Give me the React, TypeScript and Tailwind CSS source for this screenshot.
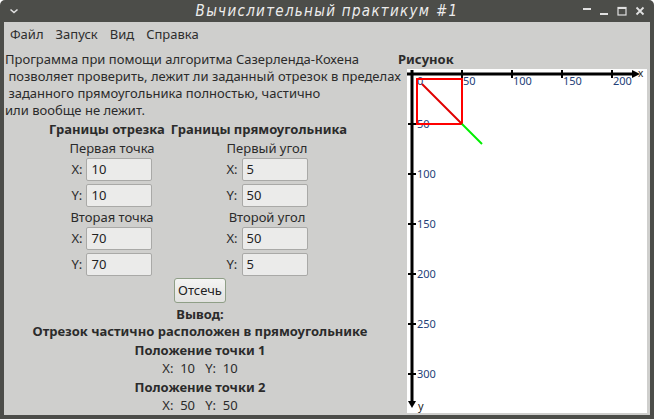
import React from "react";

const font = { fontFamily: '"Noto Sans", "Open Sans", sans-serif' };

function Field({ label, value }: { label: string; value: string }) {
  return (
    <div className="flex items-center gap-[5px]">
      <span className="w-[10px] text-[13px]">{label}</span>
      <div className="w-[66px] h-[23px] bg-[#ebebea] border border-[#a9a9a7] rounded-[2px] flex items-center pl-[4px] text-[13px] text-[#222]">
        {value}
      </div>
    </div>
  );
}

function PointGroup({ title, x, y }: { title: string; x: string; y: string }) {
  return (
    <div className="flex flex-col items-center">
      <div className="h-[18px] leading-[18px] text-[13px]">{title}</div>
      <div className="flex flex-col gap-[3px] mt-[1px]">
        <Field label="X:" value={x} />
        <Field label="Y:" value={y} />
      </div>
    </div>
  );
}

function Chart() {
  const xTicks = [55, 105, 155, 205];
  const yTicks = [55, 105, 155, 205, 255, 305];
  return (
    <svg width="240" height="344" className="block bg-white">
      {/* axes */}
      <line x1="0" y1="5" x2="228" y2="5" stroke="#000" strokeWidth="3" />
      <line x1="5" y1="1" x2="5" y2="333" stroke="#000" strokeWidth="3" />
      <polygon points="225,1 233,5 225,9" fill="#000" />
      <polygon points="1,332 5,339 9,332" fill="#000" />
      {xTicks.map((t) => (
        <line key={t} x1={t} y1="1" x2={t} y2="9" stroke="#000" strokeWidth="2" />
      ))}
      {yTicks.map((t) => (
        <line key={t} x1="1" y1={t} x2="9" y2={t} stroke="#000" strokeWidth="2" />
      ))}
      <g fill="#243f78" fontSize="11" fontFamily='"Noto Sans", sans-serif'>
        <text x="10" y="16">0</text>
        {xTicks.map((t) => (
          <text key={t} x={t + 1} y="16">
            {t - 5}
          </text>
        ))}
        {yTicks.map((t) => (
          <text key={t} x="10" y={t + 4}>
            {t - 5}
          </text>
        ))}
        <text x="11" y="341" fill="#222">y</text>
        <text x="231" y="8" fill="#222" fontSize="10">x</text>
      </g>
      {/* rectangle and segment */}
      <rect x="10" y="10" width="45" height="45" fill="none" stroke="#ff0000" strokeWidth="2" />
      <line x1="15" y1="15" x2="55" y2="55" stroke="#e00000" strokeWidth="2" />
      <line x1="55" y1="55" x2="75" y2="75" stroke="#00ee00" strokeWidth="2" />
    </svg>
  );
}

export default function App() {
  return (
    <div
      className="w-[654px] h-[419px] bg-[#4c4d49] rounded-t-[5px] flex flex-col text-[#2b2b2b]"
      style={font}
    >
      {/* Title bar */}
      <div className="h-[22px] flex items-center px-[8px] text-[#ececec]">
        <div className="w-[70px] flex items-center">
          <svg width="10" height="8" viewBox="0 0 10 8" className="ml-[1px]">
            <path d="M1.5 2.5 L5 5.5 L8.5 2.5" stroke="#e0e0e0" strokeWidth="1.6" fill="none" />
          </svg>
        </div>
        <div
          className="flex-1 text-center italic text-[15px] tracking-[1.3px]"
          style={{ fontFamily: '"DejaVu Sans Condensed", "DejaVu Sans", sans-serif' }}
        >
          Вычислительный практикум #1
        </div>
        <div className="w-[70px] flex items-center justify-end gap-[8px] pr-[1px]">
          <svg width="9" height="10" viewBox="0 0 9 10">
            <rect x="0" y="2" width="8" height="2" fill="#e0e0e0" />
          </svg>
          <svg width="9" height="10" viewBox="0 0 9 10">
            <rect x="0" y="7" width="8" height="2" fill="#e0e0e0" />
          </svg>
          <svg width="10" height="10" viewBox="0 0 10 10">
            <rect x="1" y="1.5" width="8" height="7.5" fill="none" stroke="#e0e0e0" strokeWidth="1.2" />
            <rect x="1" y="1" width="8" height="2" fill="#e0e0e0" />
          </svg>
          <svg width="10" height="10" viewBox="0 0 10 10">
            <path d="M1.5 1.5 L8.5 8.5 M8.5 1.5 L1.5 8.5" stroke="#e0e0e0" strokeWidth="1.8" />
          </svg>
        </div>
      </div>

      {/* Window body */}
      <div className="flex-1 mx-[4px] mb-[4px] bg-[#cfcfcd] flex flex-col">
        {/* Menu */}
        <div className="h-[26px] flex items-center gap-[12px] px-[6px] text-[13px] text-[#2e2e2e]">
          <span>Файл</span>
          <span>Запуск</span>
          <span>Вид</span>
          <span>Справка</span>
        </div>

        <div className="flex-1 flex">
          {/* Left panel */}
          <div className="w-[392px] flex flex-col items-center">
            <p className="self-start pl-[1px] pt-[3px] text-[13px] leading-[17px] whitespace-pre">
              {"Программа при помощи алгоритма Сазерленда-Кохена\n позволяет проверить, лежит ли заданный отрезок в пределах\n заданного прямоугольника полностью, частично\nили вообще не лежит."}
            </p>

            <div className="flex gap-[6px] font-bold text-[13px] leading-[18px] mt-[1px] mr-[4px]">
              <span>Границы отрезка</span>
              <span>Границы прямоугольника</span>
            </div>

            <div className="flex mt-[1px] ml-[6px]">
              <div className="w-[128px] flex flex-col items-center gap-[1px]">
                <PointGroup title="Первая точка" x="10" y="10" />
                <PointGroup title="Вторая точка" x="70" y="70" />
              </div>
              <div className="w-[182px] flex flex-col items-center gap-[1px]">
                <PointGroup title="Первый угол" x="5" y="50" />
                <PointGroup title="Второй угол" x="50" y="5" />
              </div>
            </div>

            <button className="mt-[2px] h-[25px] px-[3px] bg-gradient-to-b from-[#f4f4f3] to-[#e2e2e0] border border-[#8f9f87] rounded-[3px] text-[13px] text-[#222] leading-none">
              Отсечь
            </button>

            <div className="flex flex-col items-center text-[13px] mt-[3px]">
              <div className="font-bold leading-[17px]">Вывод:</div>
              <div className="font-bold leading-[17px]">Отрезок частично расположен в прямоугольнике</div>
              <div className="font-bold leading-[19px] mt-[1px]">Положение точки 1</div>
              <div className="leading-[17px] whitespace-pre">{"X:  10   Y:  10"}</div>
              <div className="font-bold leading-[18px] mt-[1px]">Положение точки 2</div>
              <div className="leading-[18px] whitespace-pre">{"X:  50   Y:  50"}</div>
            </div>
          </div>

          {/* Right panel */}
          <div className="flex-1 flex flex-col pl-[2px]">
            <div className="font-bold text-[13px] leading-[17px] mt-[3px]">Рисунок</div>
            <div className="ml-[9px] mt-[1px]">
              <Chart />
            </div>
          </div>
        </div>
      </div>
    </div>
  );
}
